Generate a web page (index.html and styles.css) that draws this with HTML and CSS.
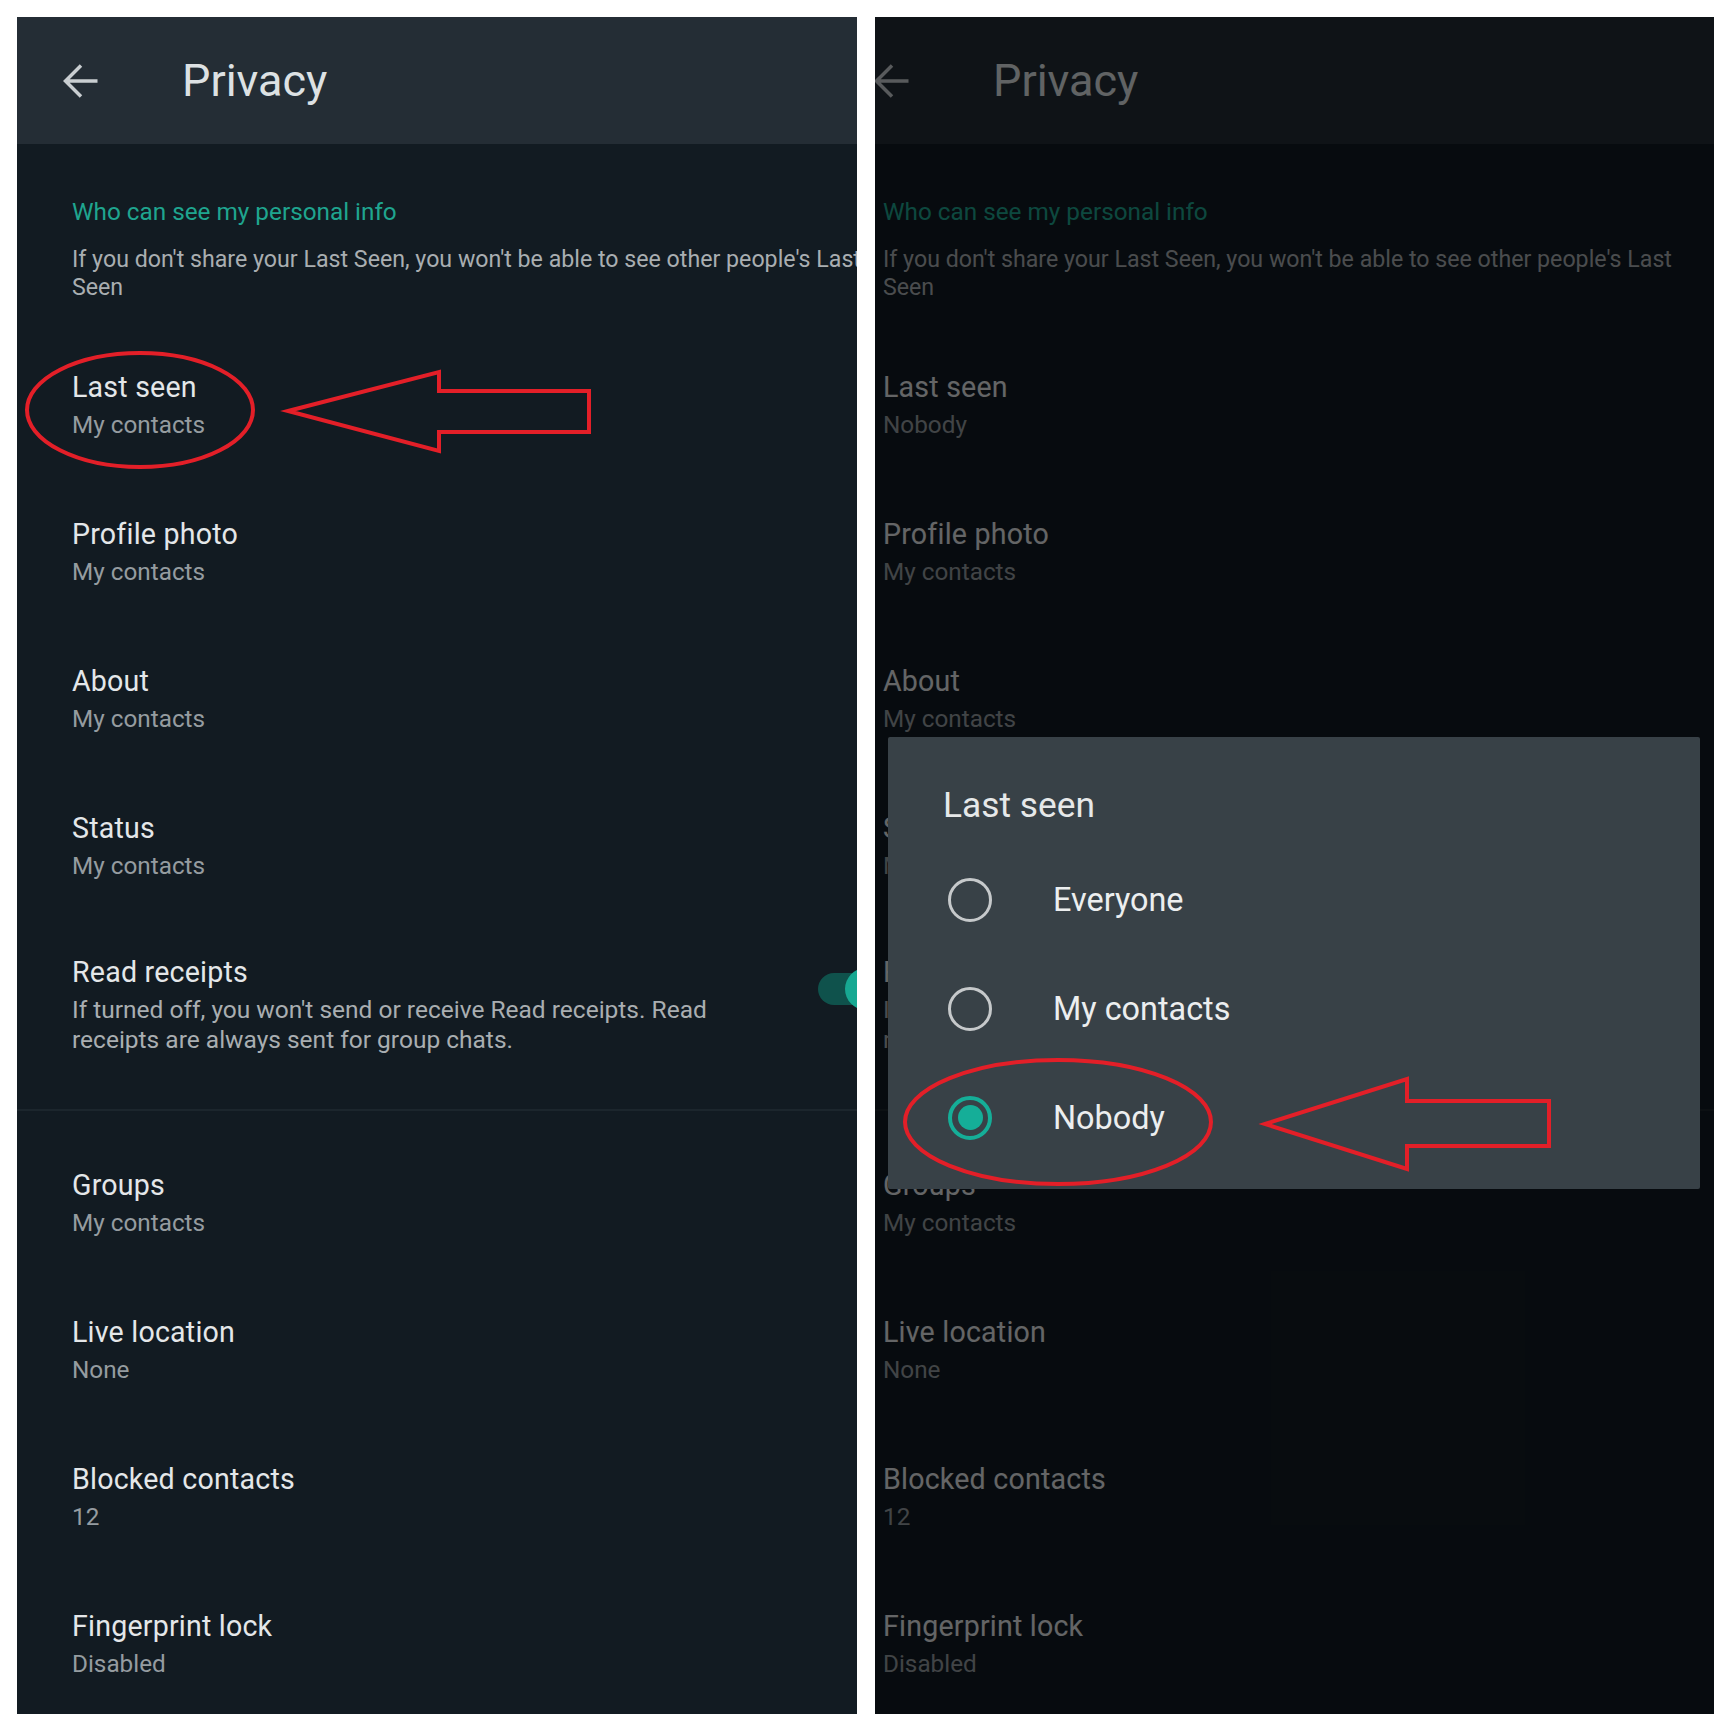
FILE: index.html
```html
<!DOCTYPE html>
<html lang="en">
<head>
    <meta charset="UTF-8">
    <meta name="viewport" content="width=device-width, initial-scale=1.0">
    <title>Privacy - Last seen</title>
    <link rel="stylesheet" href="styles.css">
</head>
<body>
<div class="sheet">

    <!-- left shot: the privacy screen as it is -->
    <div class="panel">
        <div class="screen">
            <div class="topbar">
                <svg class="back" viewBox="0 0 36 36"><path d="M34.5 18H3M18 2.5L2.5 18L18 33.5"/></svg>
                <span class="title">Privacy</span>
            </div>
            <div class="section">
                <div class="label">Who can see my personal info</div>
                <div class="note">If you don't share your Last Seen, you won't be able to see other people's Last<br>Seen</div>
            </div>
            <div class="item"><div class="name">Last seen</div><div class="value">My contacts</div></div>
            <div class="item"><div class="name">Profile photo</div><div class="value">My contacts</div></div>
            <div class="item"><div class="name">About</div><div class="value">My contacts</div></div>
            <div class="item"><div class="name">Status</div><div class="value">My contacts</div></div>
            <div class="item receipts">
                <div class="text">
                    <div class="name">Read receipts</div>
                    <div class="note">If turned off, you won't send or receive Read receipts. Read<br>receipts are always sent for group chats.</div>
                </div>
                <div class="switch"><span class="track"></span><span class="knob"></span></div>
            </div>
            <div class="group">
                <div class="item"><div class="name">Groups</div><div class="value">My contacts</div></div>
                <div class="item"><div class="name">Live location</div><div class="value">None</div></div>
                <div class="item"><div class="name">Blocked contacts</div><div class="value">12</div></div>
                <div class="item"><div class="name">Fingerprint lock</div><div class="value">Disabled</div></div>
            </div>
        </div>
    </div>

    <!-- right shot: same screen, cropped a bit further right, dialog open -->
    <div class="panel">
        <div class="screen shifted">
            <div class="topbar">
                <svg class="back" viewBox="0 0 36 36"><path d="M34.5 18H3M18 2.5L2.5 18L18 33.5"/></svg>
                <span class="title">Privacy</span>
            </div>
            <div class="section">
                <div class="label">Who can see my personal info</div>
                <div class="note">If you don't share your Last Seen, you won't be able to see other people's Last<br>Seen</div>
            </div>
            <div class="item"><div class="name">Last seen</div><div class="value">Nobody</div></div>
            <div class="item"><div class="name">Profile photo</div><div class="value">My contacts</div></div>
            <div class="item"><div class="name">About</div><div class="value">My contacts</div></div>
            <div class="item"><div class="name">Status</div><div class="value">My contacts</div></div>
            <div class="item receipts">
                <div class="text">
                    <div class="name">Read receipts</div>
                    <div class="note">If turned off, you won't send or receive Read receipts. Read<br>receipts are always sent for group chats.</div>
                </div>
                <div class="switch"><span class="track"></span><span class="knob"></span></div>
            </div>
            <div class="group">
                <div class="item"><div class="name">Groups</div><div class="value">My contacts</div></div>
                <div class="item"><div class="name">Live location</div><div class="value">None</div></div>
                <div class="item"><div class="name">Blocked contacts</div><div class="value">12</div></div>
                <div class="item"><div class="name">Fingerprint lock</div><div class="value">Disabled</div></div>
            </div>
        </div>
        <div class="scrim"></div>
        <div class="dialog">
            <div class="dialog-title">Last seen</div>
            <div class="option"><span class="radio"></span>Everyone</div>
            <div class="option"><span class="radio"></span>My contacts</div>
            <div class="option"><span class="radio on"></span>Nobody</div>
        </div>
    </div>

    <!-- red hand-drawn annotations on top of both shots -->
    <svg class="marks" viewBox="0 0 1732 1732">
        <ellipse cx="140" cy="410" rx="113" ry="57"/>
        <polygon points="288,411 439,372 439,391 589,391 589,432 439,432 439,451"/>
        <ellipse cx="1058" cy="1122" rx="153" ry="62"/>
        <polygon points="1265,1124 1407,1079 1407,1101 1549,1101 1549,1146 1407,1146 1407,1169"/>
    </svg>
</div>
</body>
</html>
```

FILE: styles.css
```css
body {
    margin: 0;
    padding: 0;
    background: #fff;
    font-family: Roboto, "Noto Sans", sans-serif;
}
.sheet {
    position: relative;
    display: flex;
    gap: 18px;
    padding: 17px 0 0 17px;
    height: 1715px;
    box-sizing: border-box;
}
.panel {
    position: relative;
    width: 840px;
    height: 1697px;
    overflow: hidden;
    background: #121b22;
}
.panel + .panel {
    width: 839px;
}
.screen {
    width: 900px;
}
/* the right shot is cropped 47px further into the screen */
.shifted {
    margin-left: -47px;
}

.topbar {
    height: 127px;
    background: #242d35;
    display: flex;
    align-items: center;
    padding-left: 46px;
}
.back {
    width: 36px;
    height: 36px;
    fill: none;
    stroke: #c9ced1;
    stroke-width: 3.5;
}
.title {
    margin-left: 83px;
    font-size: 45px;
    color: #dde1e3;
}

.section {
    padding: 50px 55px 31px;
}
.label {
    font-size: 24.3px;
    line-height: 36px;
    color: #1fa58f;
}
.note {
    margin-top: 16px;
    font-size: 23.2px;
    line-height: 27.5px;
    color: #a9aeb1;
    white-space: nowrap;
}

.item {
    padding: 36.5px 55px;
}
.name {
    font-size: 28.6px;
    letter-spacing: 0.2px;
    line-height: 37px;
    color: #e4e7e9;
}
.value {
    font-size: 24.3px;
    line-height: 37px;
    color: #959ca0;
}

.receipts {
    display: flex;
    padding: 34px 30px 54px 55px;
}
.receipts .text {
    flex: 1;
}
.receipts .note {
    margin-top: 4px;
    font-size: 24.5px;
    line-height: 30px;
}
.switch {
    position: relative;
    width: 69px;
    height: 42px;
    margin-top: 14px;
}
.track {
    position: absolute;
    left: 0;
    top: 5px;
    width: 60px;
    height: 32px;
    border-radius: 16px;
    background: #0f524c;
}
.knob {
    position: absolute;
    right: 0;
    top: 0;
    width: 42px;
    height: 42px;
    border-radius: 50%;
    background: #17a892;
}

.group {
    border-top: 2px solid #1c262d;
    padding-top: 19px;
}

/* dialog state */
.scrim {
    position: absolute;
    inset: 0;
    background: rgba(0, 0, 0, 0.56);
}
.dialog {
    position: absolute;
    left: 13px;
    top: 720px;
    width: 812px;
    height: 452px;
    box-sizing: border-box;
    padding: 48px 0 18px;
    background: #384147;
    border-radius: 2px;
}
.dialog-title {
    padding-left: 55px;
    margin-bottom: 20px;
    font-size: 35.3px;
    line-height: 40px;
    color: #e6e8e9;
}
.option {
    height: 109px;
    display: flex;
    align-items: center;
    gap: 61px;
    padding-left: 60px;
    font-size: 32.4px;
    color: #eceeef;
}
.radio {
    width: 44px;
    height: 44px;
    box-sizing: border-box;
    border: 3.5px solid #c6c9cb;
    border-radius: 50%;
    display: grid;
    place-items: center;
}
.radio.on {
    border: 4px solid #15ae98;
}
.radio.on::after {
    content: "";
    width: 25px;
    height: 25px;
    border-radius: 50%;
    background: #15ae98;
}

.marks {
    position: absolute;
    left: 0;
    top: 0;
    width: 1732px;
    height: 1732px;
    pointer-events: none;
    fill: none;
    stroke: #e31f28;
    stroke-width: 4;
}
```
